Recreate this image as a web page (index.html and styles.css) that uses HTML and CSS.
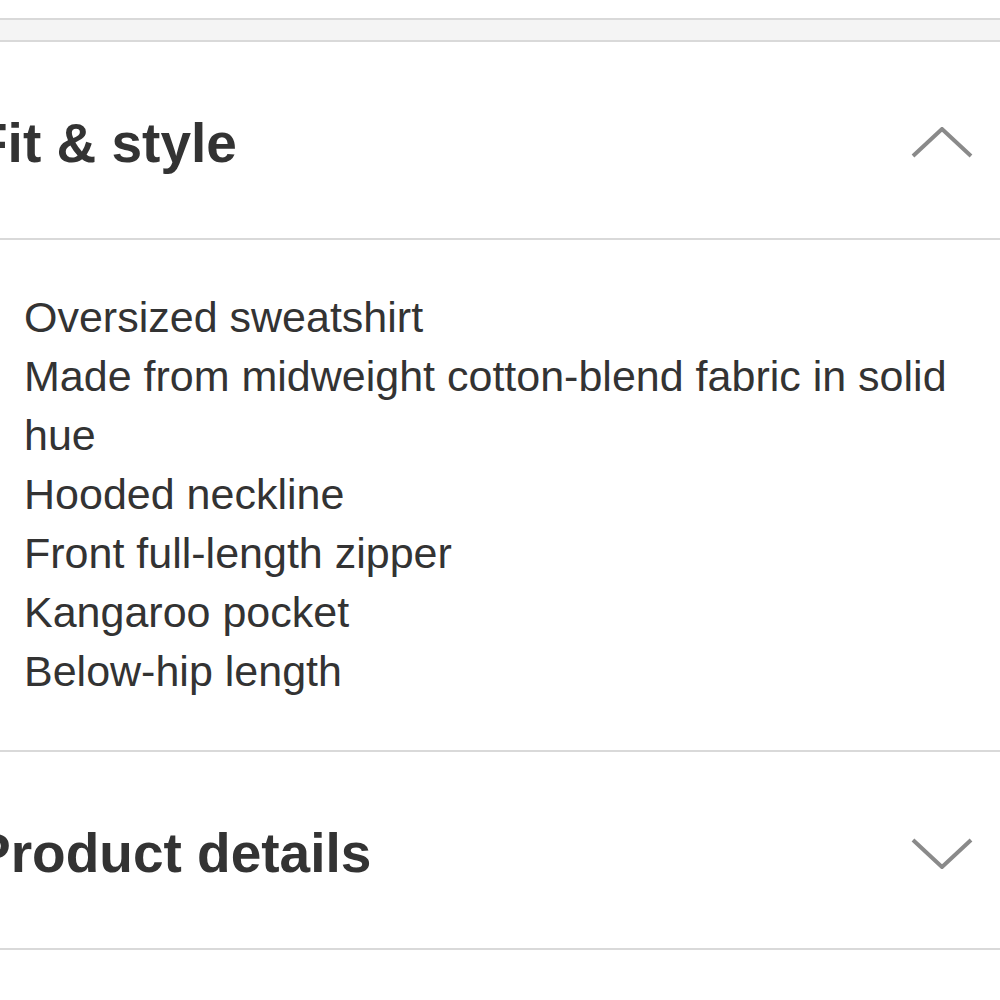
FILE: index.html
```html
<!DOCTYPE html>
<html lang="en">
<head>
<meta charset="utf-8">
<title>Fit &amp; style</title>
<link rel="stylesheet" href="styles.css">
</head>
<body>
<div class="page">
  <div class="spacer"></div>
  <div class="band"></div>
  <section class="panel">
    <div class="panel-head">
      <h2 class="panel-title">Fit &amp; style</h2>
      <svg class="chev" viewBox="0 0 64 32" width="64" height="32" aria-hidden="true">
        <polyline points="3,29 32,2 61,29" />
      </svg>
    </div>
    <ul class="panel-body">
      <li>Oversized sweatshirt</li>
      <li>Made from midweight cotton-blend fabric in solid hue</li>
      <li>Hooded neckline</li>
      <li>Front full-length zipper</li>
      <li>Kangaroo pocket</li>
      <li>Below-hip length</li>
    </ul>
  </section>
  <section class="panel">
    <div class="panel-head">
      <h2 class="panel-title">Product details</h2>
      <svg class="chev" viewBox="0 0 64 32" width="64" height="32" aria-hidden="true">
        <polyline points="3,3 32,30 61,3" />
      </svg>
    </div>
  </section>
</div>
</body>
</html>
```
FILE: styles.css
```css
html, body {
  margin: 0;
  padding: 0;
  background: #fff;
}
body {
  font-family: "Liberation Sans", Arial, Helvetica, sans-serif;
  color: #333;
  overflow: hidden;
}
.page {
  width: 1000px;
}
.spacer {
  height: 18px;
}
.band {
  height: 20px;
  background: #f4f4f4;
  border-top: 2px solid #d9d9d9;
  border-bottom: 2px solid #d9d9d9;
}
.panel {
  border-bottom: 2px solid #d9d9d9;
}
.panel-head {
  display: flex;
  align-items: center;
  justify-content: space-between;
  padding: 69px 26px 63px 0;
  border-bottom: 2px solid #d9d9d9;
}
.panel:last-child .panel-head {
  border-bottom: none;
}
.panel-title {
  margin: 0 0 0 -26px;
  font-size: 55px;
  line-height: 64px;
  font-weight: 700;
  color: #333;
}
.chev {
  display: block;
  flex: none;
}
.chev polyline {
  fill: none;
  stroke: #8a8a8a;
  stroke-width: 4;
  stroke-linecap: butt;
  stroke-linejoin: miter;
}
.panel-body {
  list-style: none;
  margin: 0;
  padding: 48px 30px 49px 24px;
  font-size: 43px;
  line-height: 59px;
  color: #333;
}
.panel-body li {
  margin: 0;
}
```
